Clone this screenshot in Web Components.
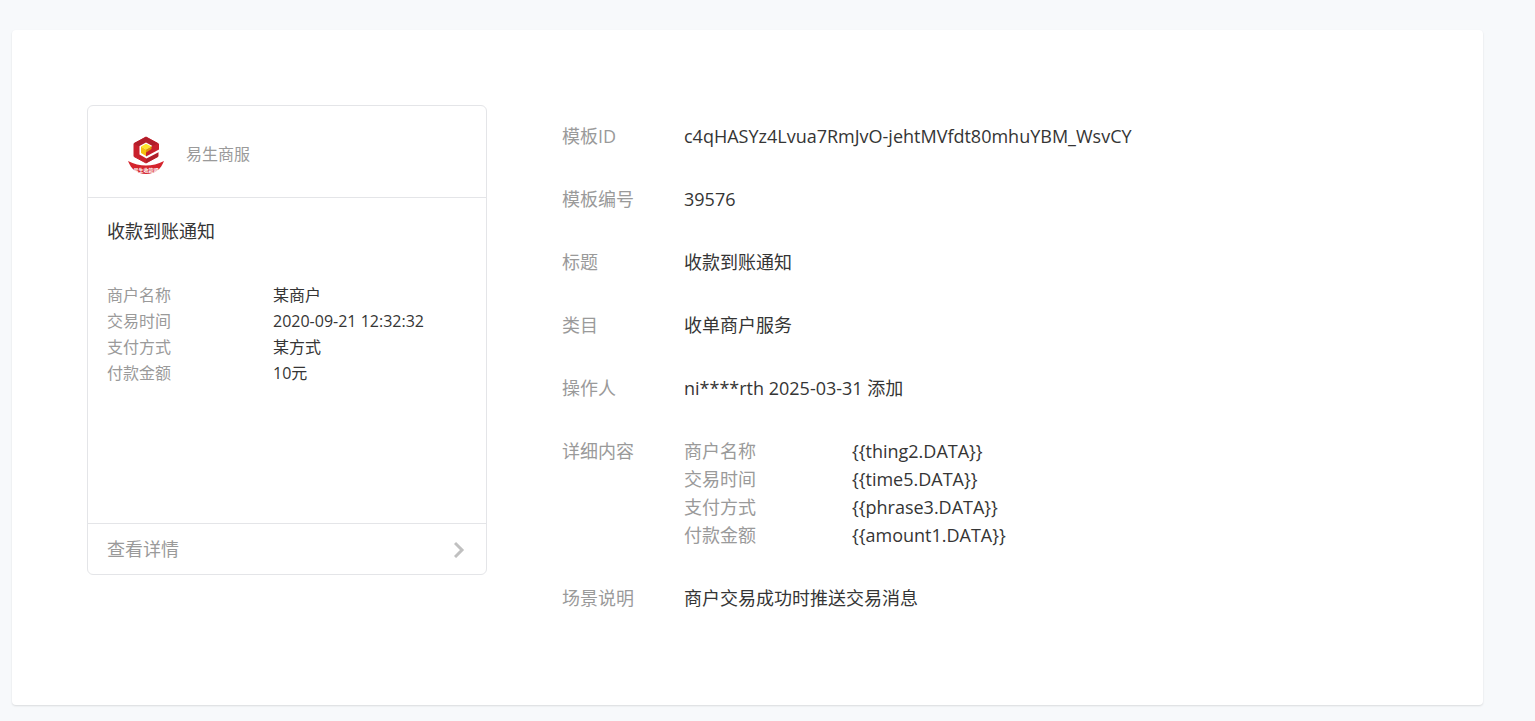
<!DOCTYPE html>
<html lang="zh-CN">
<head>
<meta charset="utf-8">
<meta name="viewport" content="width=device-width, initial-scale=1">
<title>模板详情</title>
<style>
  body {
    margin: 0;
    padding: 30px 52px 16px 12px;
    background: #f7f9fb;
    color: #353535;
    font: 18px/28px "Open Sans", "Noto Sans CJK SC", sans-serif;
    --muted: #9a9a9a;
    --line: #e4e5e8;
  }
</style>
</head>
<body>
<detail-panel>
  <message-card slot="preview" account="易生商服" heading="收款到账通知">
    <pair-row label="商户名称">某商户</pair-row>
    <pair-row label="交易时间">2020-09-21 12:32:32</pair-row>
    <pair-row label="支付方式">某方式</pair-row>
    <pair-row label="付款金额">10元</pair-row>
  </message-card>
  <field-row label="模板ID">c4qHASYz4Lvua7RmJvO-jehtMVfdt80mhuYBM_WsvCY</field-row>
  <field-row label="模板编号">39576</field-row>
  <field-row label="标题">收款到账通知</field-row>
  <field-row label="类目">收单商户服务</field-row>
  <field-row label="操作人">ni****rth 2025-03-31 添加</field-row>
  <field-row label="详细内容">
    <pair-row label="商户名称">{{thing2.DATA}}</pair-row>
    <pair-row label="交易时间">{{time5.DATA}}</pair-row>
    <pair-row label="支付方式">{{phrase3.DATA}}</pair-row>
    <pair-row label="付款金额">{{amount1.DATA}}</pair-row>
  </field-row>
  <field-row label="场景说明">商户交易成功时推送交易消息</field-row>
</detail-panel>

<script>
  class BaseElement extends HTMLElement {
    constructor() {
      super();
      this.attachShadow({ mode: "open" }).innerHTML = this.constructor.markup;
    }
    connectedCallback() {
      this.shadowRoot.querySelectorAll("[data-attr]").forEach(node => {
        node.textContent = this.getAttribute(node.dataset.attr) || "";
      });
    }
  }

  // White panel: preview on the left, stacked fields on the right.
  customElements.define("detail-panel", class extends BaseElement {
    static markup = `
      <style>
        :host { display: block; background: #fff; border-radius: 4px; box-shadow: 0 1px 2px rgba(0,0,0,.12); }
        main { display: flex; align-items: flex-start; gap: 75px; padding: 75px; }
        .fields { flex: 1; min-width: 0; display: flex; flex-direction: column; gap: 35px; padding: 17px 0 18px; }
      </style>
      <main>
        <slot name="preview"></slot>
        <section class="fields"><slot></slot></section>
      </main>`;
  });

  // Preview of the message as the recipient sees it.
  customElements.define("message-card", class extends BaseElement {
    static markup = `
      <style>
        :host {
          display: flex; flex-direction: column; flex: 0 0 400px; box-sizing: border-box;
          min-height: 470px; border: 1px solid var(--line); border-radius: 6px;
          --pair-label: 166px;
        }
        header { display: flex; align-items: center; gap: 20px; padding: 27px 38px 22px; color: var(--muted);
          font-size: 16px; line-height: 42px; border-bottom: 1px solid var(--line); }
        svg { display: block; }
        .logo { width: 40px; height: 42px; }
        .body { flex: 1; padding: 20px 19px; font-size: 16px; line-height: 26px; }
        h2 { margin: 0 0 38px; font-size: 18px; line-height: 26px; font-weight: 400; }
        a { display: flex; justify-content: space-between; align-items: center; padding: 11px 20px 11px 19px;
          color: var(--muted); text-decoration: none; border-top: 1px solid var(--line); }
      </style>
      <header>
        <svg class="logo" viewBox="0 -2 40 42" aria-hidden="true">
          <path d="M20 2 32 8.500V21.500L20 28 8 21.500V8.500Z" fill="#c9202c" stroke="#c9202c" stroke-linejoin="round"/>
          <path d="M20 2 32 8.500 26 12 20 8.500 14 12 8 8.500Z" fill="#b01e2a"/>
          <path d="M32 16V21.500L20 28V22.500Z" fill="#b01e2a"/>
          <path d="M20 7.500 26.500 11V15L33 12.500V17L20.500 23.500 13.500 19.500V11Z" fill="#fff"/>
          <path d="M26 11 33 8.500V14.500L20 21.500V17Z" fill="#c9202c"/>
          <path d="M15 11.500 20 8.800 25.500 11.500 20 14.500Z" fill="#ffe52b"/>
          <path d="M15 11.500 20 14.500V21L15 18Z" fill="#f5c010"/>
          <path d="M20 14.500 25.500 11.500V14L20 17.500Z" fill="#dd9709"/>
          <path d="M2 26Q20 35 38 26C35 34 29 39 20 39S5 34 2 26Z" fill="#d4242d"/>
          <text x="20" y="37" text-anchor="middle" font-size="5" font-weight="700" fill="#fff">易生收款吧</text>
        </svg>
        <span data-attr="account"></span>
      </header>
      <div class="body">
        <h2 data-attr="heading"></h2>
        <slot></slot>
      </div>
      <a href="#detail">查看详情
        <svg width="12" height="18" viewBox="0 0 12 18" fill="none" stroke="#c0c0c0" stroke-width="3" aria-hidden="true"><path d="m1 3 7 7-7 7"/></svg>
      </a>`;
  });

  const rowMarkup = width => `
    <style>
      :host { display: block; }
      dl { display: grid; grid-template-columns: ${width} 1fr; margin: 0; }
      dt { color: var(--muted); }
      dd { margin: 0; min-width: 0; overflow-wrap: anywhere; }
    </style>
    <dl><dt data-attr="label"></dt><dd><slot></slot></dd></dl>`;

  customElements.define("field-row", class extends BaseElement {
    static markup = rowMarkup("122px");
  });
  customElements.define("pair-row", class extends BaseElement {
    static markup = rowMarkup("var(--pair-label, 168px)");
  });
</script>
</body>
</html>
